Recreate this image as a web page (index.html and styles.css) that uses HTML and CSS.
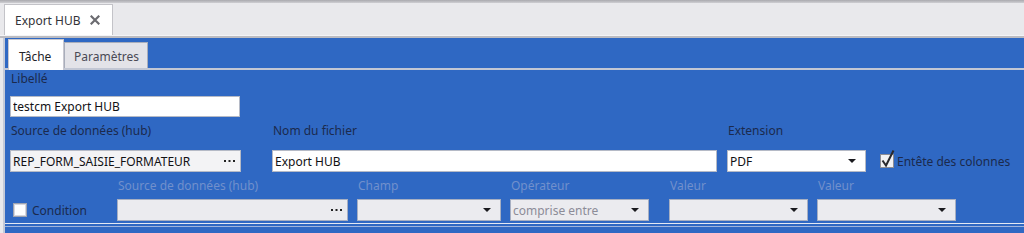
FILE: index.html
```html
<!DOCTYPE html>
<html lang="fr">
<head>
<meta charset="utf-8">
<title>Export HUB</title>
<link rel="stylesheet" href="styles.css">
</head>
<body>
<div class="top-edge"></div>
<div class="doc-strip">
  <div class="doc-tab">
    <span class="doc-tab-title">Export HUB</span>
    <svg class="doc-close" width="10" height="10" viewBox="0 0 10 10"><path d="M1.5 1.5 L8.5 8.5 M8.5 1.5 L1.5 8.5" stroke="#6b6b70" stroke-width="2.2" stroke-linecap="square"/></svg>
  </div>
</div>
<div class="doc-sep"></div>
<div class="frame">
  <div class="inner-tabs">
    <div class="itab active">Tâche</div>
    <div class="itab">Paramètres</div>
  </div>
  <div class="content">
    <div class="row-a">
      <div class="lbl">Libellé</div>
      <div class="field f-a"><span class="val">testcm Export HUB</span></div>
    </div>
    <div class="row-b">
      <div class="lbl">Source de données (hub)</div>
      <div class="lbl">Nom du fichier</div>
      <div class="lbl">Extension</div>
      <div></div>
      <div class="field grey w231"><span class="val">REP_FORM_SAISIE_FORMATEUR</span>
        <svg class="dots" width="11" height="2" viewBox="0 0 11 2"><rect x="0" y="0" width="2" height="2" fill="#222"/><rect x="4.5" y="0" width="2" height="2" fill="#222"/><rect x="9" y="0" width="2" height="2" fill="#222"/></svg>
      </div>
      <div class="field w445"><span class="val">Export HUB</span></div>
      <div class="field w139"><span class="val">PDF</span><span class="arrow"></span></div>
      <label class="chk">
        <svg class="chk-box" width="18" height="22" viewBox="0 0 18 22">
          <rect x="0.5" y="6.5" width="13" height="13" fill="#f2f2f4" stroke="#8d8d94"/>
          <path d="M2.5 12.5 L6 17.5 L13.5 2.5" fill="none" stroke="#2a2a2e" stroke-width="2"/>
        </svg>
        <span>Entête des colonnes</span>
      </label>
    </div>
    <div class="row-c">
      <div></div>
      <div class="lbl dis">Source de données (hub)</div>
      <div class="lbl dis">Champ</div>
      <div class="lbl dis">Opérateur</div>
      <div class="lbl dis">Valeur</div>
      <div class="lbl dis">Valeur</div>
      <label class="cond">
        <span class="cond-box"></span>
        <span>Condition</span>
      </label>
      <div class="field disabled w231">
        <svg class="dots" width="11" height="2" viewBox="0 0 11 2"><rect x="0" y="0" width="2" height="2" fill="#222"/><rect x="4.5" y="0" width="2" height="2" fill="#222"/><rect x="9" y="0" width="2" height="2" fill="#222"/></svg>
      </div>
      <div class="field disabled w144"><span class="arrow"></span></div>
      <div class="field disabled w139"><span class="val muted">comprise entre</span><span class="arrow"></span></div>
      <div class="field disabled w139"><span class="arrow"></span></div>
      <div class="field disabled w139"><span class="arrow"></span></div>
    </div>
  </div>
  <div class="below"></div>
</div>
</body>
</html>
```
FILE: styles.css
```css
html, body {
  margin: 0;
  padding: 0;
}
body {
  width: 1024px;
  height: 233px;
  overflow: hidden;
  background: #e9e9ec;
  font-family: "Noto Sans", "Open Sans", sans-serif;
  font-size: 12px;
}
.top-edge {
  height: 3px;
  background: linear-gradient(#a9a9ae, #cfcfd3);
}
.doc-strip {
  height: 32px;
  display: flex;
  align-items: flex-end;
  padding-left: 4px;
}
.doc-tab {
  box-sizing: border-box;
  width: 109px;
  height: 31px;
  background: #ffffff;
  border: 1px solid #c3c3c8;
  border-bottom: none;
  display: flex;
  align-items: center;
  padding-left: 10px;
  color: #333338;
}
.doc-tab-title {
  flex: 1;
}
.doc-close {
  margin-right: 12px;
}
.doc-sep {
  height: 2px;
  background: #bcbcc1;
  border-top: 1px solid #f4f4f6;
}
.frame {
  margin-left: 3px;
  background: #2f68c3;
  border-left: 2px solid #c4cad8;
}
.inner-tabs {
  height: 30px;
  display: flex;
  align-items: flex-end;
  padding-left: 3px;
  border-bottom: 2px solid #c2c7d4;
}
.itab {
  box-sizing: border-box;
  height: 26px;
  width: 84px;
  padding: 2px 0 0 9px;
  background: #e3e3e8;
  border: 1px solid #a9aebb;
  border-bottom: none;
  color: #4a4a55;
  display: flex;
  align-items: center;
  line-height: 16px;
}
.itab.active {
  position: relative;
  height: 31px;
  margin-bottom: -2px;
  width: 56px;
  background: #ffffff;
  border-color: #c8c8d0;
  color: #222228;
  padding: 3px 0 0 10px;
}
.content {
  padding: 1px 0 2px 5px;
  border-bottom: 1px solid #e3e8f3;
}
.lbl {
  height: 16px;
  line-height: 16px;
  padding-left: 1px;
  color: #1b2a4d;
  white-space: nowrap;
}
.lbl.dis {
  color: #7190cc;
}
.row-a {
  display: flex;
  flex-direction: column;
  row-gap: 9px;
}
.row-b {
  margin-top: 6px;
  display: grid;
  grid-template-columns: 262px 455px 152px auto;
  grid-template-rows: 16px 22px;
  row-gap: 11px;
  justify-items: start;
}
.row-c {
  margin-top: 6px;
  display: grid;
  grid-template-columns: 107px 240px 153px 159px 148px 139px;
  grid-template-rows: 16px 22px;
  row-gap: 5px;
  justify-items: start;
}
.w231 { width: 231px; }
.w445 { width: 445px; }
.w144 { width: 144px; }
.w139 { width: 139px; }
.field {
  box-sizing: border-box;
  height: 22px;
  background: #ffffff;
  border: 1px solid #b5bac6;
  display: flex;
  align-items: center;
  padding: 0 8px 0 2px;
  color: #111114;
}
.field.f-a {
  width: 230px;
  height: 21px;
}
.field.grey {
  background: #f3f3f5;
}
.field.disabled {
  background: #ebebef;
  border-color: #a7afc2;
}
.val {
  flex: 1;
  white-space: nowrap;
  overflow: hidden;
}
.val.muted {
  color: #8c8c98;
}
.dots {
  margin-left: auto;
  margin-right: -3px;
}
.arrow {
  margin-left: auto;
  width: 0;
  height: 0;
  border-left: 4px solid transparent;
  border-right: 4px solid transparent;
  border-top: 4px solid #1a1a1e;
  margin-right: 1px;
}
.chk {
  display: flex;
  align-items: center;
  color: #1b2a4d;
  white-space: nowrap;
  height: 22px;
}
.chk-box {
  margin-top: -5px;
  margin-left: 1px;
  margin-right: -1px;
}
.cond {
  display: flex;
  align-items: center;
  padding-left: 3px;
  color: #1b2a4d;
}
.cond-box {
  box-sizing: border-box;
  width: 14px;
  height: 14px;
  border: 1px solid #a0a4b0;
  background: #ffffff;
  box-shadow: inset 0 0 0 1px #d8d8de;
  margin-right: 5px;
}
.below {
  height: 10px;
  border-top: 1px solid #9fb4dc;
  margin-top: 2px;
}
```
